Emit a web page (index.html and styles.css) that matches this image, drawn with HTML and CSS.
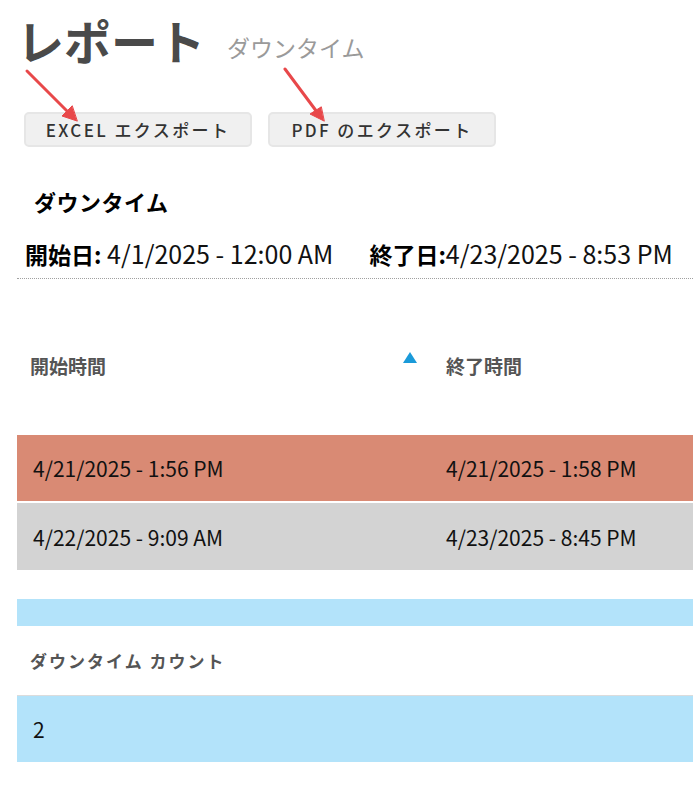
FILE: index.html
```html
<!DOCTYPE html>
<html lang="ja">
<head>
<meta charset="utf-8">
<link rel="stylesheet" href="styles.css">
</head>
<body>
<div class="page">
  <header class="title-row">
    <h1 class="title">レポート</h1>
    <span class="subtitle">ダウンタイム</span>
  </header>
  <div class="actions">
    <button class="btn">EXCEL エクスポート</button>
    <button class="btn">PDF のエクスポート</button>
    <svg class="arrows" width="340" height="60" viewBox="0 0 340 60">
      <g stroke="#e8484a" stroke-width="3" stroke-linecap="round" fill="#e8484a">
        <line x1="27" y1="4" x2="68" y2="45"/>
        <polygon points="77,54 62,49 72,39" stroke-width="1"/>
        <line x1="285" y1="2" x2="317" y2="45"/>
        <polygon points="324,54 310,47 321,40" stroke-width="1"/>
      </g>
    </svg>
  </div>
  <h2 class="section">ダウンタイム</h2>
  <div class="dates">
    <span class="date"><b>開始日:</b> 4/1/2025 - 12:00 AM</span>
    <span class="date"><b>終了日:</b>4/23/2025 - 8:53 PM</span>
  </div>
  <div class="table">
    <div class="thead">
      <div class="th">開始時間<span class="sort"></span></div>
      <div class="th">終了時間</div>
    </div>
    <div class="tr red">
      <div class="td">4/21/2025 - 1:56 PM</div>
      <div class="td">4/21/2025 - 1:58 PM</div>
    </div>
    <div class="tr grey">
      <div class="td">4/22/2025 - 9:09 AM</div>
      <div class="td">4/23/2025 - 8:45 PM</div>
    </div>
  </div>
  <div class="band"></div>
  <div class="count-head">ダウンタイム カウント</div>
  <div class="count-row">2</div>
</div>
</body>
</html>
```

FILE: styles.css
```css
html, body {
  margin: 0;
  padding: 0;
  background: #fff;
  overflow: hidden;
}
body {
  font-family: "Noto Sans CJK JP", "Noto Sans", sans-serif;
  color: #222;
}
.page {
  padding: 0 0 0 17px;
  width: 900px;
}
.title-row {
  display: flex;
  align-items: flex-start;
  gap: 22px;
  height: 70px;
}
.title {
  margin: 0;
  font-size: 47px;
  font-weight: 700;
  color: #4a4a4a;
  line-height: 80px;
}
.subtitle {
  margin-top: 32px;
  font-size: 23px;
  line-height: 30px;
  color: #9a9a9a;
}
.actions {
  position: relative;
  display: flex;
  gap: 16px;
  padding: 42px 0 0 7px;
}
.arrows {
  position: absolute;
  left: -17px;
  top: -3px;
}
.btn {
  font-family: "Noto Sans CJK JP", "Noto Sans", sans-serif;
  font-size: 17px;
  font-weight: 500;
  letter-spacing: 2.4px;
  color: #333;
  background: #f0f0f0;
  border: 2px solid #e6e6e6;
  border-radius: 5px;
  width: 228px;
  height: 35px;
  padding: 0;
}
.section {
  margin: 0;
  padding: 37px 0 0 17px;
  font-size: 22px;
  font-weight: 700;
  color: #000;
  line-height: 34px;
  letter-spacing: 0.5px;
}
.dates {
  display: flex;
  align-items: baseline;
  gap: 36px;
  padding: 20px 0 0 8px;
  height: 40px;
  width: 668px;
  font-size: 25px;
  color: #111;
  line-height: 30px;
  border-bottom: 1px dotted #a0a0a0;
}
.date b {
  font-size: 23px;
  font-weight: 700;
  color: #000;
}
.table {
  width: 826px;
}
.thead {
  display: grid;
  grid-template-columns: 413px 1fr;
  height: 156px;
}
.th {
  position: relative;
  padding: 73px 0 0 16px;
  font-size: 19px;
  line-height: 27px;
  font-weight: 700;
  color: #555;
}
.th:first-child {
  padding-left: 13px;
}
.sort {
  position: absolute;
  right: 13px;
  top: 73px;
  width: 0;
  height: 0;
  border-left: 7px solid transparent;
  border-right: 7px solid transparent;
  border-bottom: 11px solid #1a9ad9;
}
.tr {
  display: grid;
  grid-template-columns: 413px 1fr;
  height: 66px;
  align-items: center;
  font-size: 21px;
  color: #111;
}
.tr.red {
  background: #d98a74;
  border-bottom: 2px solid #fff;
}
.tr.grey {
  background: #d3d3d3;
  height: 67px;
}
.td {
  padding-left: 16px;
}
.band {
  margin-top: 29px;
  height: 27px;
  background: #b3e3fa;
}
.count-head {
  height: 69px;
  display: flex;
  align-items: center;
  padding-left: 13px;
  font-size: 17px;
  font-weight: 700;
  color: #555;
  letter-spacing: 2px;
}
.count-row {
  height: 66px;
  border-top: 1px solid #dcdcdc;
  background: #b3e3fa;
  display: flex;
  align-items: center;
  padding-left: 16px;
  font-size: 21px;
  color: #111;
}
```
